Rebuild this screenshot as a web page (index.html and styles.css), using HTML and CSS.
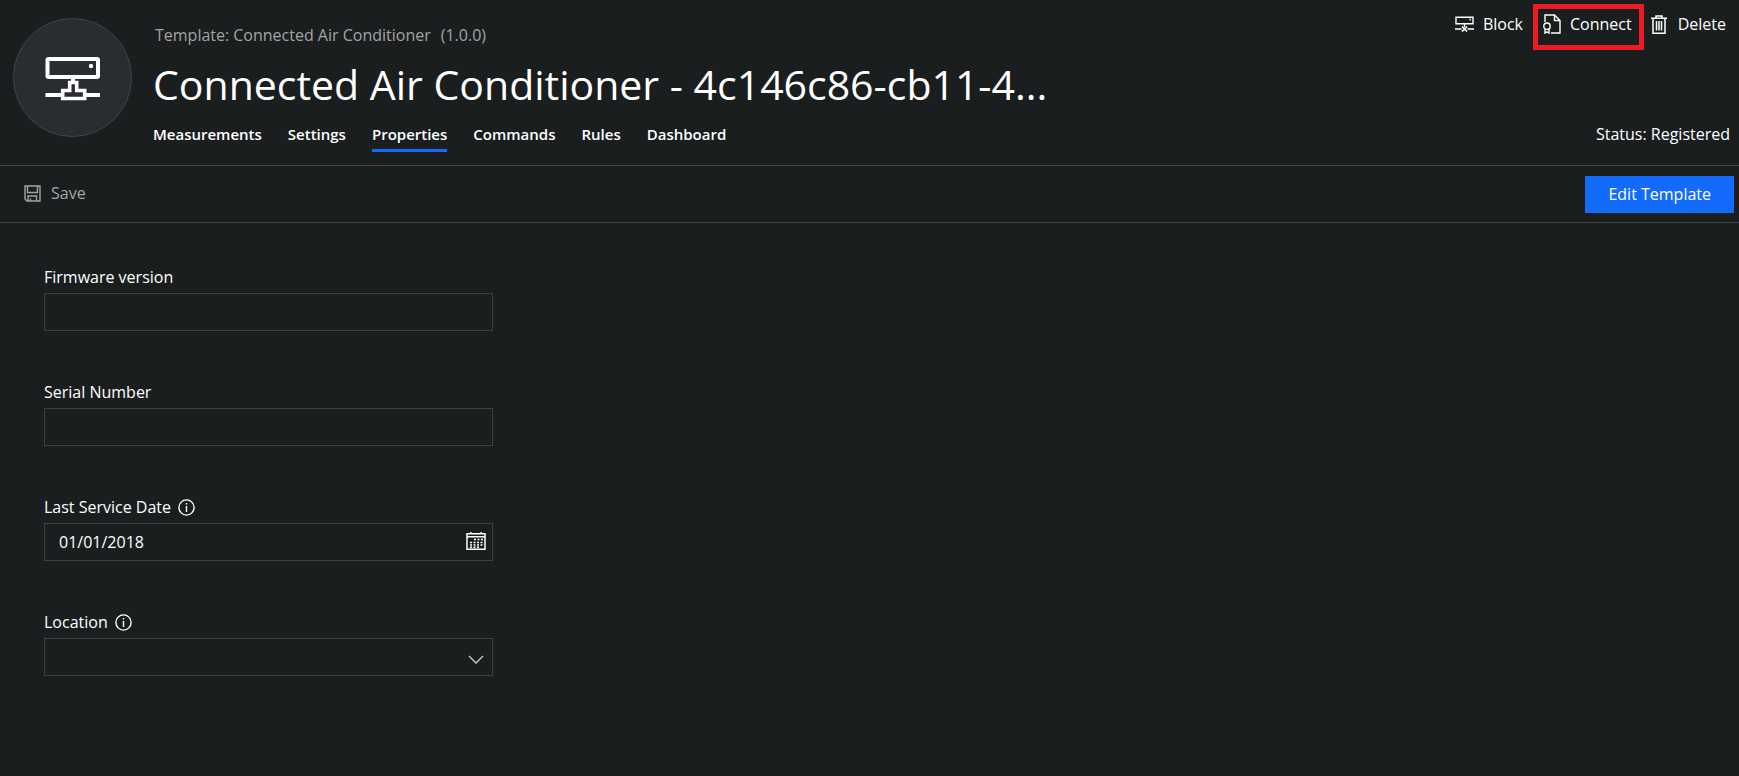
FILE: index.html
```html
<!DOCTYPE html>
<html lang="en">
<head>
<meta charset="utf-8">
<title>Connected Air Conditioner</title>
<link rel="stylesheet" href="styles.css">
</head>
<body>
<header class="header">
  <div class="avatar">
    <svg width="56" height="46" viewBox="0 0 56 46" fill="none" stroke="#fff" stroke-width="4">
      <rect x="2.500" y="4" width="50.500" height="18" rx="1"/>
      <circle cx="46" cy="11" r="2.200" fill="#fff" stroke="none"/>
      <path d="M28 22v6M.5 40h17M40 40h15"/>
      <path d="M17.700 43.500v-8h7v-8h7v8h8v8z" stroke-width="3.600"/>
    </svg>
  </div>
  <div class="heading">
    <p class="template"><span>Template:</span><span>Connected Air Conditioner</span><span class="version">(1.0.0)</span></p>
    <h1 class="title">Connected Air Conditioner - 4c146c86-cb11-4...</h1>
    <nav class="tabs">
      <a class="tab" href="#measurements">Measurements</a>
      <a class="tab" href="#settings">Settings</a>
      <a class="tab tab-active" href="#properties" aria-current="page">Properties</a>
      <a class="tab" href="#commands">Commands</a>
      <a class="tab" href="#rules">Rules</a>
      <a class="tab" href="#dashboard">Dashboard</a>
    </nav>
  </div>
  <div class="side">
    <div class="actions">
      <button class="action" type="button">
        <svg width="19" height="18" viewBox="0 0 19 18" fill="none" stroke="#fff" stroke-width="1.4">
          <path d="M1 2.200h17v6.600H1zM0 14h6.500M12.500 14H19M9.500 9v3"/>
          <path d="M7 11.500l5 5M12 11.500l-5 5" stroke-width="1.700"/>
          <path d="M14.500 4.500H16"/>
        </svg>
        Block
      </button>
      <button class="action action-marked" type="button">
        <svg width="18" height="20" viewBox="0 0 18 20" fill="none" stroke="#fff" stroke-width="1.4">
          <path d="M2 8V1h9.500L17 6.500V19H8M11.500 1v5.500H17"/>
          <circle cx="4" cy="12.200" r="3.200"/>
          <path d="M2 15v4.200l2-1.400 2 1.400V15"/>
        </svg>
        Connect
      </button>
      <button class="action action-wide" type="button">
        <svg width="16" height="19" viewBox="0 0 16 19" fill="none" stroke="#fff" stroke-width="1.5">
          <path d="M0 3.200h16M5 3V1h6v2M2 3.500v14.700h12V3.500M5.500 6v9.500M8 6v9.500M10.500 6v9.500"/>
        </svg>
        Delete
      </button>
    </div>
    <p class="status">Status: Registered</p>
  </div>
</header>
<div class="toolbar">
  <button class="save" type="button" disabled>
    <svg width="17" height="17" viewBox="0 0 17 17" fill="none" stroke="#a3a4a4" stroke-width="1.400">
      <path d="M1 1h15v15H3l-2-2zM3.500 1v6.500h10V1M4 16v-5h8.500v5M6.500 16v-2.500"/>
    </svg>
    Save
  </button>
  <button class="edit" type="button">Edit Template</button>
</div>
<main class="form">
  <div class="field">
    <div class="label-row"><label for="firmware">Firmware version</label></div>
    <input class="control" id="firmware" type="text">
  </div>
  <div class="field">
    <div class="label-row"><label for="serial">Serial Number</label></div>
    <input class="control" id="serial" type="text">
  </div>
  <div class="field">
    <div class="label-row">
      <label for="service">Last Service Date</label>
      <svg width="17" height="17" viewBox="0 0 17 17" fill="none" stroke="#fff" stroke-width="1.400"><circle cx="8.500" cy="8.500" r="7.600"/><path d="M8.500 7v6M8.500 4v1.600"/></svg>
    </div>
    <div class="control-wrap">
      <input class="control" id="service" type="text" value="01/01/2018">
      <svg class="glyph" width="20" height="18" viewBox="0 0 20 18" fill="none" stroke="#fff" stroke-width="1.500">
        <path d="M1 1.800h18v15.400H1zM1 4.800h18M4.800 0v2M15.200 0v2"/>
        <path d="M8 7.500h9M4 10.500h13M4 13h13M4 15.200h9" stroke-dasharray="2 1.500"/>
      </svg>
    </div>
  </div>
  <div class="field">
    <div class="label-row">
      <label for="location">Location</label>
      <svg width="17" height="17" viewBox="0 0 17 17" fill="none" stroke="#fff" stroke-width="1.400"><circle cx="8.500" cy="8.500" r="7.600"/><path d="M8.500 7v6M8.500 4v1.600"/></svg>
    </div>
    <div class="control-wrap">
      <select class="control" id="location"><option></option></select>
      <svg class="glyph glyph-chevron" width="16" height="9" viewBox="0 0 16 9" fill="none" stroke="#d0d1d1" stroke-width="1.300"><path d="M1 1l7 7 7-7"/></svg>
    </div>
  </div>
</main>
</body>
</html>
```
FILE: styles.css
```css
* {
  box-sizing: border-box;
}

body {
  margin: 0;
  min-height: 100vh;
  background: #1b1e1f;
  color: #fff;
  font: 16px/24px "Open Sans", "Noto Sans", sans-serif;
}

button,
input,
select {
  font: inherit;
  color: inherit;
}

button {
  border: 0;
  background: none;
  cursor: pointer;
}

svg {
  flex: none;
}

p,
h1 {
  margin: 0;
}

.header {
  display: flex;
  min-height: 166px;
  padding-left: 13px;
  border-bottom: 1px solid #434546;
}

.avatar {
  display: flex;
  flex: none;
  align-items: center;
  justify-content: center;
  width: 119px;
  height: 119px;
  margin-top: 18px;
  border: 1px solid #414344;
  border-radius: 50%;
  background: #2a2d2f;
}

.heading {
  flex: 1;
  min-width: 0;
  padding: 23px 0 0 21px;
}

.template {
  display: flex;
  gap: 4px;
  padding-left: 2px;
  color: #a3a4a4;
}

.version {
  margin-left: 6px;
}

.title {
  margin-top: 7px;
  overflow: hidden;
  font-size: 41px;
  font-weight: 400;
  line-height: 60px;
  text-overflow: ellipsis;
  white-space: nowrap;
}

.tabs {
  display: flex;
  gap: 26px;
  margin-top: 8px;
}

.tab {
  padding-bottom: 3px;
  border-bottom: 3px solid transparent;
  color: #fff;
  font-size: 15px;
  font-weight: 600;
  text-decoration: none;
}

.tab-active {
  border-color: #136bfb;
}

.side {
  display: flex;
  flex: none;
  flex-direction: column;
  align-items: flex-end;
  justify-content: space-between;
  padding: 4px 9px 19px 0;
}

.actions {
  display: flex;
  align-items: flex-start;
  padding-right: 4px;
}

.action {
  display: flex;
  gap: 9px;
  align-items: center;
  height: 46px;
  padding: 0 10px 6px 0;
}

.action-marked {
  padding: 0 7px 6px 5px;
  border: 5px solid #ed1c24;
}

.action-wide {
  gap: 11px;
  padding: 0 0 6px 7px;
}

.toolbar {
  display: flex;
  align-items: center;
  justify-content: space-between;
  height: 57px;
  padding: 0 5px 0 24px;
  border-bottom: 1px solid #434546;
}

.save {
  display: flex;
  gap: 10px;
  align-items: center;
  padding: 0 0 2px;
  color: #a3a4a4;
}

.edit {
  height: 37px;
  padding: 0 23px;
  background: #136bfb;
}

.form {
  display: grid;
  gap: 48px;
  max-width: 493px;
  padding: 41px 0 48px 44px;
}

.label-row {
  display: flex;
  gap: 7px;
  align-items: center;
  height: 29px;
  padding-bottom: 3px;
}

.control-wrap {
  position: relative;
}

.control {
  display: block;
  width: 100%;
  height: 38px;
  padding: 0 14px;
  border: 1px solid #3d3f40;
  border-radius: 0;
  background: transparent;
  appearance: none;
}

.glyph {
  position: absolute;
  top: 9px;
  right: 7px;
  pointer-events: none;
}

.glyph-chevron {
  top: 17px;
  right: 9px;
}
```
